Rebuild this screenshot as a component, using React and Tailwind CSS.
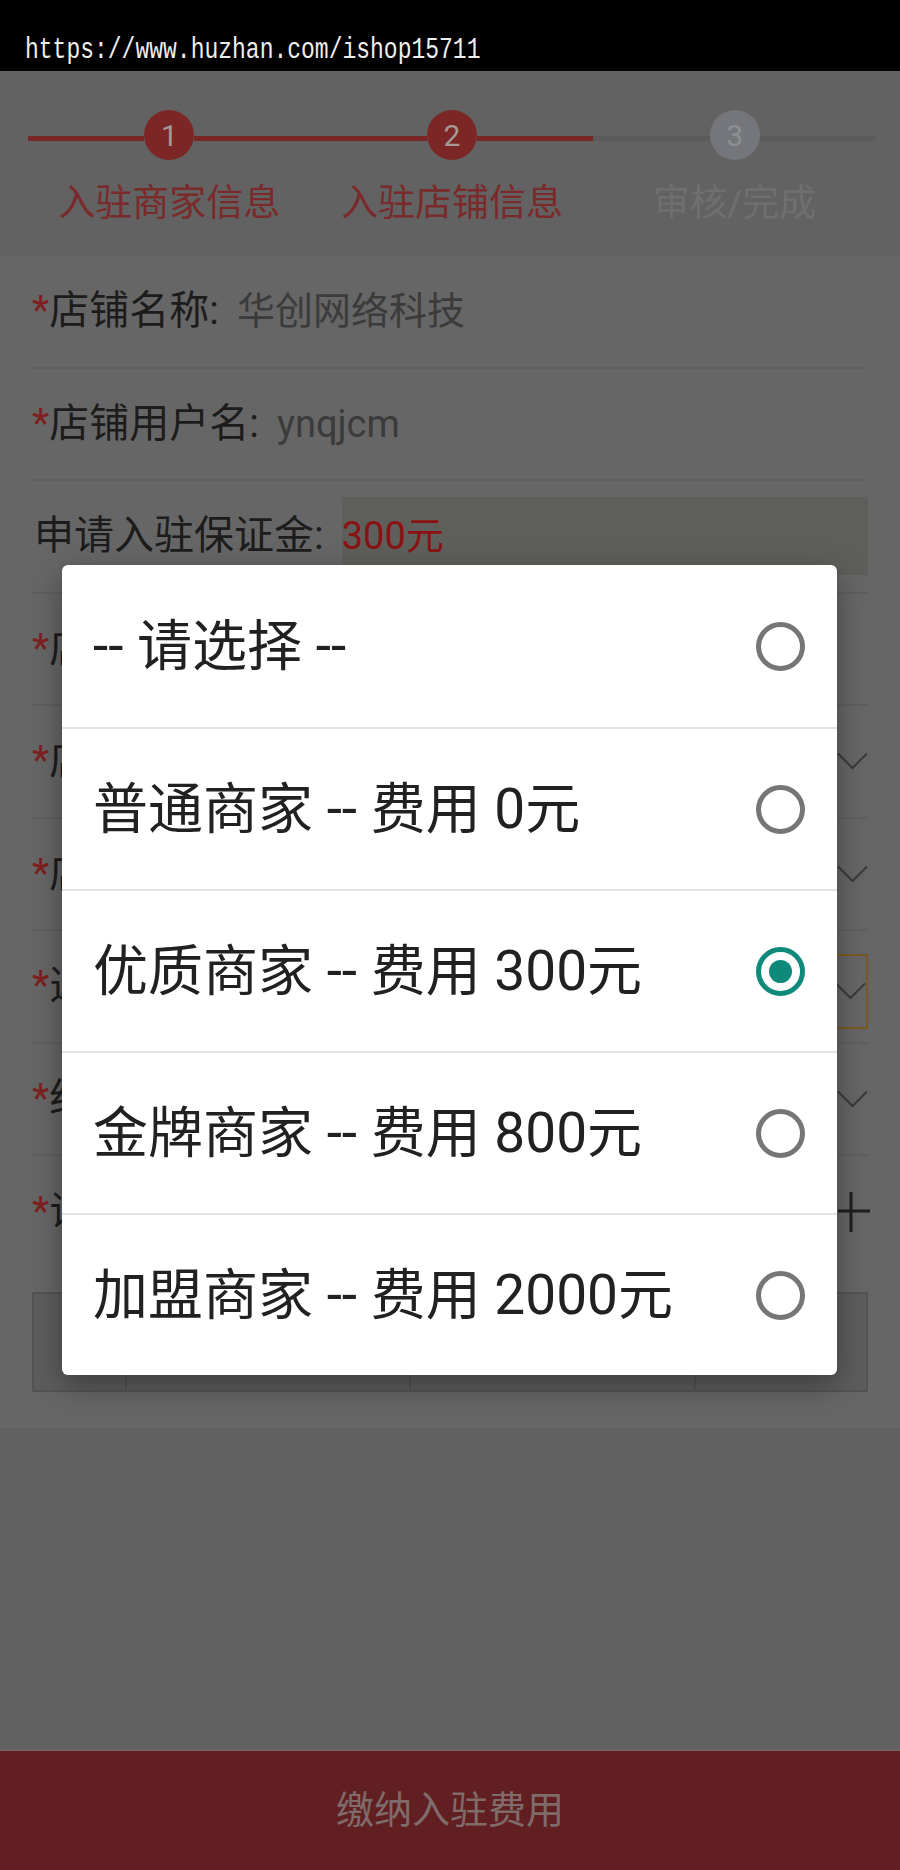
import React, { useState } from 'react';

const steps = [
    { num: 1, label: '入驻商家信息', done: true, lineRight: true },
    { num: 2, label: '入驻店铺信息', done: true, lineRight: true },
    { num: 3, label: '审核/完成', done: false, lineRight: false },
];

const options = [
    { label: '-- 请选择 --' },
    { label: '普通商家 -- 费用 0元' },
    { label: '优质商家 -- 费用 300元' },
    { label: '金牌商家 -- 费用 800元' },
    { label: '加盟商家 -- 费用 2000元' },
];

const Chevron = () => (
    <svg width="31" height="18" viewBox="0 0 31 18" fill="none">
        <polyline points="1,1.5 15.5,16 30,1.5" stroke="#3a3a3a" strokeWidth="2" />
    </svg>
);

const Plus = () => (
    <svg width="32" height="40" viewBox="0 0 32 40" fill="none">
        <line x1="0" y1="19" x2="32" y2="19" stroke="#1f1f1f" strokeWidth="3" />
        <line x1="13" y1="0" x2="13" y2="40" stroke="#1f1f1f" strokeWidth="3" />
    </svg>
);

const Label = ({ required, children }) => (
    <span className="text-[#1c1c1c] text-[40px] whitespace-nowrap">
        {required && <span className="text-[#7e2020]">*</span>}
        {children}
    </span>
);

const Row = ({ children, last }) => (
    <div className={`h-[112.5px] flex items-center ${last ? '' : 'border-b-2 border-[#5f5f5f]'}`}>
        {children}
    </div>
);

const StepHeader = () => (
    <div className="h-[185px] bg-[#626262] pl-[28px] pr-[24px] pt-[39px] flex">
        {steps.map((s) => {
            const red = s.done;
            const leftColor = red ? 'bg-[#7a2626]' : 'bg-[#5b5b5b]';
            const rightColor = s.lineRight ? 'bg-[#7a2626]' : 'bg-[#5b5b5b]';
            return (
                <div key={s.num} className="flex-1 flex flex-col items-center">
                    <div className="w-full h-[50px] flex items-center">
                        <div className={`flex-1 h-[5px] mt-[6px] ${leftColor}`} />
                        <div
                            className={`w-[50px] h-[50px] rounded-full flex items-center justify-center text-[30px] ${
                                red ? 'bg-[#7c2626] text-[#a39999]' : 'bg-[#74767b] text-[#8d8f93]'
                            }`}
                        >
                            {s.num}
                        </div>
                        <div className={`flex-1 h-[5px] mt-[6px] ${rightColor}`} />
                    </div>
                    <div
                        className={`mt-[22px] text-[37px] leading-[44px] whitespace-nowrap ${
                            red ? 'text-[#7a2a2a]' : 'text-[#6f6f6f]'
                        }`}
                    >
                        {s.label}
                    </div>
                </div>
            );
        })}
    </div>
);

export default function App() {
    const [selected, setSelected] = useState(2);

    return (
        <div className="relative w-[900px] h-[1870px] flex flex-col bg-[#616161] font-[family-name:Roboto,'Noto_Sans_CJK_SC',sans-serif] overflow-hidden">
            {/* url bar */}
            <div className="h-[71px] bg-black pl-[25px] pt-[37px]">
                <div className="text-[23px] leading-[23px] text-[#eeeeee] origin-top scale-y-125 font-[family-name:'Liberation_Mono',monospace]">
                    https://www.huzhan.com/ishop15711
                </div>
            </div>

            <StepHeader />

            {/* form */}
            <div className="bg-[#666666] px-[32px] pb-[36px] text-[38px] leading-[46px]">
                <Row>
                    <Label required>店铺名称:</Label>
                    <span className="ml-[18px] text-[#3b3b3b]">华创网络科技</span>
                </Row>
                <Row>
                    <Label required>店铺用户名:</Label>
                    <span className="ml-[18px] text-[#3b3b3b]">ynqjcm</span>
                </Row>
                <Row>
                    <span className="pl-[2px]">
                        <Label>申请入驻保证金:</Label>
                    </span>
                    <div className="flex-1 ml-[18px] h-[78px] bg-[#5e5e5b] flex items-center text-[#8a1212]">
                        300元
                    </div>
                </Row>
                <Row>
                    <Label required>店铺等级:</Label>
                </Row>
                <Row>
                    <Label required>店铺分类:</Label>
                    <div className="ml-auto"><Chevron /></div>
                </Row>
                <Row>
                    <Label required>店铺所在地:</Label>
                    <div className="ml-auto"><Chevron /></div>
                </Row>
                <Row>
                    <Label required>选择入驻类型:</Label>
                    <div className="ml-auto mt-[10px] w-[420px] h-[75px] border-2 border-[#7a5a22] flex items-center justify-end">
                        <Chevron />
                    </div>
                </Row>
                <Row>
                    <Label required>经营类目:</Label>
                    <div className="ml-auto"><Chevron /></div>
                </Row>
                <Row last>
                    <Label required>证件照片:</Label>
                    <div className="ml-auto -mr-[2px]"><Plus /></div>
                </Row>
                <div className="mt-[23px] h-[100px] border-2 border-[#535353] bg-[#5d5d5d] grid grid-cols-[93px_284px_285px_1fr]">
                    <div className="border-r-2 border-[#535353]" />
                    <div className="border-r-2 border-[#535353]" />
                    <div className="border-r-2 border-[#535353]" />
                    <div />
                </div>
            </div>

            <div className="flex-1" />

            {/* submit */}
            <button className="h-[120px] w-full bg-[#611f21] border-t border-[#7a6262] text-[38px] text-[#806b6b]">
                缴纳入驻费用
            </button>

            {/* select dialog */}
            <div className="absolute top-[565px] left-[62px] w-[775px] bg-white rounded-[6px] shadow-[0_10px_30px_rgba(0,0,0,0.35)] overflow-hidden">
                {options.map((o, i) => (
                    <div
                        key={i}
                        onClick={() => setSelected(i)}
                        className={`h-[162px] flex items-center pl-[31px] pr-[32px] cursor-pointer ${
                            i > 0 ? 'border-t-2 border-[#e2e2e2]' : ''
                        }`}
                    >
                        <span className="flex-1 text-[55px] leading-[64px] text-[#212121] whitespace-nowrap">{o.label}</span>
                        <div
                            className={`w-[49px] h-[49px] rounded-full border-[5px] flex items-center justify-center ${
                                selected === i ? 'border-[#0f8a7a]' : 'border-[#767676]'
                            }`}
                        >
                            {selected === i && <div className="w-[23px] h-[23px] rounded-full bg-[#0f8a7a]" />}
                        </div>
                    </div>
                ))}
            </div>
        </div>
    );
}
